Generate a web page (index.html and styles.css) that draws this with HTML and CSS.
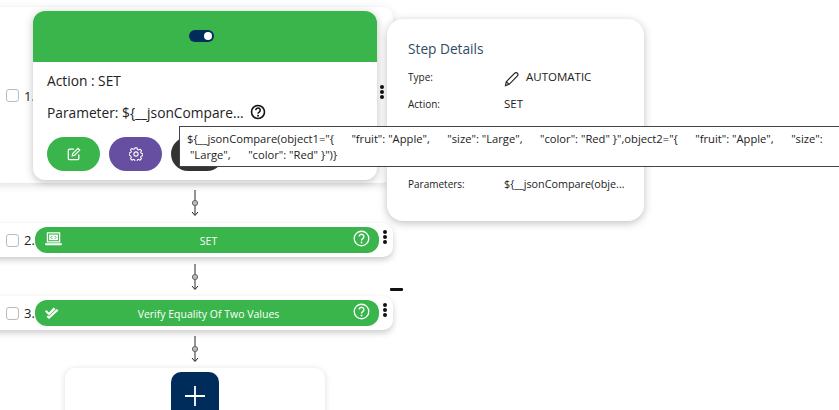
FILE: index.html
```html
<!DOCTYPE html>
<html lang="en">
<head>
<meta charset="utf-8">
<title>Steps</title>
<link rel="stylesheet" href="styles.css">
</head>
<body>
<main class="canvas">
  <section class="flow">
    <div class="row row-tall">
      <span class="check"></span><span class="num">1.</span>
      <span class="kebab"><i></i><i></i><i></i></span>
    </div>
    <svg class="link" viewBox="0 0 16 26"><use href="#conn"/></svg>
    <div class="row">
      <span class="check"></span><span class="num">2.</span>
      <div class="pill">
        <svg class="pill-icon" viewBox="0 0 18 15"><path d="M2.500 1h13v9.500h-13z" fill="none" stroke="#fff" stroke-width="1.400"/><path d="M4.300 2.800h9.400v6h-9.400z" fill="#fff"/><path d="M7.800 4.200 6.200 5.800l1.600 1.600M10.200 4.200l1.600 1.600-1.600 1.600" fill="none" stroke="#3ab54c" stroke-width="1"/><path d="M0 12h18v1.200a1 1 0 0 1-1 1H1a1 1 0 0 1-1-1z" fill="#fff"/></svg>
        <span class="pill-text">SET</span>
        <svg class="help" viewBox="0 0 18 18"><circle cx="9" cy="9" r="7.700" fill="none" stroke="#fff" stroke-width="1.400"/><path d="M6.500 7a2.500 2.500 0 1 1 3.800 2.100c-.9.600-1.300 1-1.300 2" fill="none" stroke="#fff" stroke-width="1.500"/><circle cx="9" cy="13.200" r="1" fill="#fff"/></svg>
      </div>
      <span class="kebab"><i></i><i></i><i></i></span>
    </div>
    <svg class="link" viewBox="0 0 16 26"><use href="#conn"/></svg>
    <div class="row">
      <span class="check"></span><span class="num">3.</span>
      <div class="pill">
        <svg class="pill-icon pill-check" viewBox="0 0 14 13"><path d="M1.500 4 4 6.500 8.500 1.500 10.500 3 4 9.500 0 5.500zM3 9.500 4 10.500 11.500 3 13.500 4.500 4 13 1.500 10.800z" fill="#fff"/></svg>
        <span class="pill-text">Verify Equality Of Two Values</span>
        <svg class="help" viewBox="0 0 18 18"><circle cx="9" cy="9" r="7.700" fill="none" stroke="#fff" stroke-width="1.400"/><path d="M6.500 7a2.500 2.500 0 1 1 3.800 2.100c-.9.600-1.300 1-1.300 2" fill="none" stroke="#fff" stroke-width="1.500"/><circle cx="9" cy="13.200" r="1" fill="#fff"/></svg>
      </div>
      <span class="kebab"><i></i><i></i><i></i></span>
    </div>
    <svg class="link link-end" viewBox="0 0 16 26"><use href="#conn"/></svg>
    <div class="add-card">
      <button class="add-btn" type="button" aria-label="Add step">
        <svg viewBox="0 0 20 20"><path d="M10 0v20M0 10h20" stroke="#fff" stroke-width="1.800"/></svg>
      </button>
    </div>
  </section>

  <svg class="defs" width="0" height="0"><defs>
    <g id="conn"><path d="M8 0v25" stroke="#666" stroke-width="1.400"/><circle cx="8" cy="13" r="2.600" fill="#bbb" stroke="#666" stroke-width="1"/><path d="M5 22l3 3.500 3-3.500" fill="none" stroke="#222" stroke-width="1"/></g>
  </defs></svg>

  <span class="dash"></span>

  <aside class="details">
    <h2>Step Details</h2>
    <dl class="details-grid">
      <dt>Type:</dt>
      <dd class="type"><svg viewBox="0 0 16 16"><path d="M1.500 14.500l.8-3.800 8.200-8.400c1-1 2.300-1 3 0 .7.800.6 1.900-.3 2.800l-8 8.200z M2.300 10.700l3 3" fill="none" stroke="#222" stroke-width="1.200"/></svg>AUTOMATIC</dd>
      <dt>Action:</dt>
      <dd>SET</dd>
      <dt class="params">Parameters:</dt>
      <dd class="params">${__jsonCompare(obje...</dd>
    </dl>
  </aside>

  <article class="popup">
    <header class="popup-head"><span class="toggle"><i></i></span></header>
    <div class="popup-body">
      <p class="line">Action : SET</p>
      <p class="line param">Parameter: ${__jsonCompare...
        <svg class="help-dark" viewBox="0 0 18 18"><circle cx="9" cy="9" r="7.300" fill="none" stroke="#111" stroke-width="1.800"/><path d="M6.500 7a2.500 2.500 0 1 1 3.800 2.100c-.9.600-1.300 1-1.300 2" fill="none" stroke="#111" stroke-width="1.700"/><circle cx="9" cy="13.300" r="1.100" fill="#111"/></svg>
      </p>
      <div class="actions">
        <button class="act act-green" type="button" aria-label="Edit"><svg viewBox="0 0 16 16"><path d="M8 2.500H3a1.500 1.500 0 0 0-1.500 1.500v9A1.500 1.500 0 0 0 3 14.500h9a1.500 1.500 0 0 0 1.500-1.500V8.500" fill="none" stroke="#fff" stroke-width="1.500"/><path d="M6.500 7.500 12.500 1.500l2 2-6 6-2.500.5z" fill="none" stroke="#fff" stroke-width="1.400"/></svg></button>
        <button class="act act-purple" type="button" aria-label="Settings"><svg viewBox="0 0 16 16"><path d="M6.800 1h2.400l.4 1.900 1.300.6 1.700-1 1.700 1.700-1 1.700.6 1.300 1.900.4v2.400l-1.900.4-.6 1.300 1 1.700-1.700 1.700-1.700-1-1.300.6-.4 1.900H6.800l-.4-1.900-1.300-.6-1.700 1-1.700-1.700 1-1.700-.6-1.300L.2 9.200V6.800l1.900-.4.600-1.300-1-1.700 1.700-1.700 1.700 1 1.300-.6z" fill="none" stroke="#fff" stroke-width="1.200" stroke-linejoin="round"/><circle cx="8" cy="8" r="2.400" fill="none" stroke="#fff" stroke-width="1.300"/></svg></button>
        <button class="act act-dark" type="button" aria-label="Delete"></button>
      </div>
    </div>
  </article>

  <div class="tooltip">${__jsonCompare(object1="{ &nbsp; &nbsp; &nbsp;"fruit": "Apple", &nbsp; &nbsp; &nbsp;"size": "Large", &nbsp; &nbsp; &nbsp;"color": "Red" }",object2="{ &nbsp; &nbsp; &nbsp;"fruit": "Apple", &nbsp; &nbsp; &nbsp;"size": &nbsp;"Large", &nbsp; &nbsp; &nbsp;"color": "Red" }")}</div>
</main>
</body>
</html>
```

FILE: styles.css
```css
* { box-sizing: border-box; }
html, body { margin: 0; padding: 0; background: #fff; overflow: hidden; }
body { width: 839px; height: 410px; font-family: "Open Sans", sans-serif; color: #222; }
.canvas { position: relative; width: 839px; height: 410px; overflow: hidden; }
.flow { display: flex; flex-direction: column; align-items: flex-start; padding-top: 7px; margin-left: -8px; width: 401px; }

.row { display: flex; align-items: center; width: 401px; height: 34px; padding-left: 14px; background: #fff; border-radius: 0 10px 10px 0; box-shadow: 0 3px 6px rgba(0,0,0,.2); position: relative; }
.row-tall { height: 176px; box-shadow: 0 2px 8px rgba(0,0,0,.13); }
.check { width: 13px; height: 13px; border: 1px solid #bbb; border-radius: 3px; background: #fff; flex: none; }
.num { font-size: 13px; line-height: 16px; margin-left: 5px; width: 13px; flex: none; color: #222; }
.row-tall .check, .row-tall .num { margin-top: 1px; }
.pill { position: relative; display: flex; align-items: center; justify-content: center; width: 344px; height: 26px; padding-left: 3px; background: #3ab54c; border-radius: 12px; margin-left: -2px; flex: none; color: #fff; }
.pill-text { font-size: 10.500px; line-height: 14px; margin-top: 1px; }
.pill-icon { position: absolute; left: 10px; top: 5px; width: 17px; height: 14px; }
.pill-check { top: 6px; left: 10px; width: 14px; height: 13px; }
.help { position: absolute; right: 9px; top: 3px; width: 17px; height: 17px; }
.kebab { position: absolute; left: 390.500px; top: 7px; display: flex; flex-direction: column; gap: 1px; }
.kebab i { display: block; width: 4px; height: 4px; border-radius: 50%; background: #111; }
.row-tall .kebab { left: 388px; top: 78px; }

.link { display: block; width: 16px; height: 26px; margin: 7px 0 6px 195px; flex: none; }
.link:first-of-type { margin-bottom: 7px; }
.add-card { margin: 0 0 0 73px; width: 260px; height: 60px; background: #fff; border-radius: 10px; box-shadow: 0 1px 6px rgba(0,0,0,.14); padding-top: 4px; display: flex; justify-content: center; }
.link-end { margin-top: 6px; }
.add-btn { width: 48px; height: 48px; background: #002c5c; border: 0; border-radius: 10px; padding: 14px; display: block; }
.add-btn svg { display: block; width: 20px; height: 20px; }
.defs { position: absolute; }

.dash { position: absolute; left: 390px; top: 288px; width: 13px; height: 3px; background: #111; border-radius: 1px; }

.details { position: absolute; left: 387px; top: 19px; width: 257px; height: 202px; background: #fff; border-radius: 16px; box-shadow: 0 2px 8px rgba(0,0,0,.25); padding: 20px 0 0 21px; }
.details h2 { margin: 0; font-size: 13.700px; font-weight: 400; line-height: 20px; color: #2f4a63; }
.details-grid { display: grid; grid-template-columns: 96px 1fr; margin: 11px 0 0; font-size: 10px; }
.details-grid dt { height: 27px; line-height: 14px; font-size: 10px; color: #222; }
.details-grid dd { margin: 0; height: 27px; line-height: 14px; font-size: 11.500px; color: #222; }
.type { display: flex; align-items: flex-start; gap: 6px; }
.type svg { width: 16px; height: 16px; flex: none; margin-top: 1px; }
.details-grid .params { margin-top: 53px; }
.details-grid dd.params { font-size: 10.800px; white-space: nowrap; }

.popup { position: absolute; left: 33px; top: 11px; width: 344px; height: 169px; background: #fff; border-radius: 12px; box-shadow: 0 2px 8px rgba(0,0,0,.25); overflow: hidden; }
.popup-head { height: 51px; background: #3ab54c; display: flex; align-items: center; justify-content: center; padding: 0 8px 2px 0; }
.toggle { display: block; width: 25px; height: 12px; border-radius: 6px; background: #002c5c; position: relative; }
.toggle i { position: absolute; right: 2px; top: 2px; width: 8px; height: 8px; border-radius: 50%; background: #fff; }
.popup-body { padding: 9px 14px 0; }
.line { margin: 0; font-size: 13.750px; line-height: 20px; color: #222; }
.param { margin-top: 12px; display: flex; align-items: center; gap: 6px; }
.help-dark { width: 16px; height: 16px; flex: none; margin-top: -2px; }
.actions { display: flex; gap: 9px; margin-top: 14px; }
.act { width: 53px; height: 34px; border: 0; border-radius: 17px; padding: 0; display: flex; align-items: center; justify-content: center; }
.act svg { width: 14px; height: 14px; }
.act-green { background: #3ab54c; }
.act-purple { background: #664fa0; }
.act-dark { background: #333; }

.tooltip { position: absolute; left: 179px; top: 126px; width: 670px; height: 41px; background: #fff; border: 1px solid #444; padding: 4px 14px 0 7px; font-size: 11.200px; line-height: 16px; color: #222; }
```
